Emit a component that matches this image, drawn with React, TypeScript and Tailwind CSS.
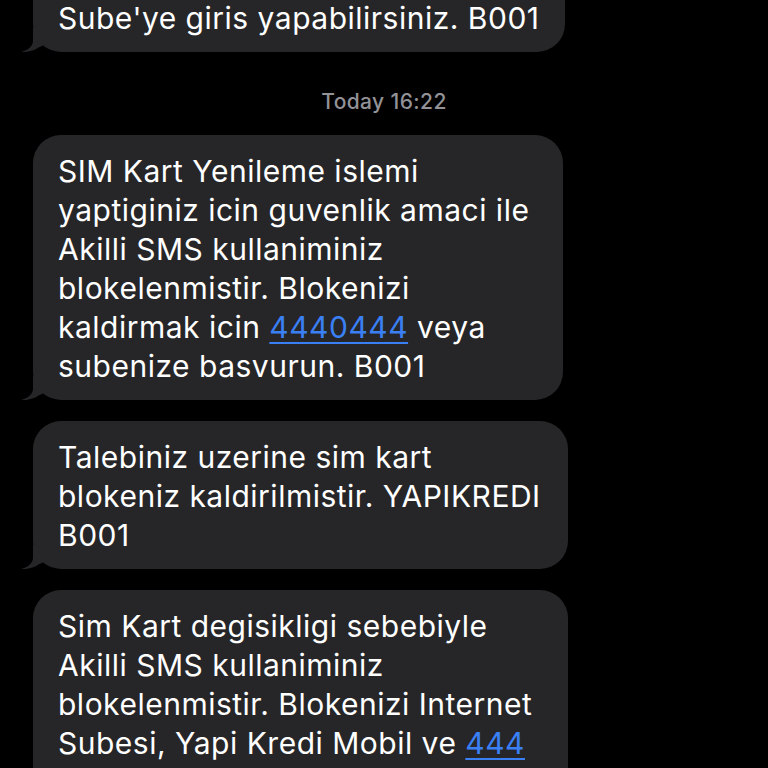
import React from "react";

type Line = (string | { link: string })[];

function Tail() {
  return (
    <svg
      className="absolute bottom-0 left-[-12px]"
      width="32"
      height="24"
      viewBox="0 0 32 24"
      fill="#262628"
    >
      <path d="M12 0 L12 13 C12 18 7 22.5 0 24 C6 24.6 13 22.8 17.5 19.6 L32 13 L32 0 Z" />
    </svg>
  );
}

function Bubble({
  lines,
  width,
  tail = true,
  pad = "pb-[14px]",
}: {
  lines: Line[];
  width: string;
  tail?: boolean;
  pad?: string;
}) {
  return (
    <div className={`relative ml-[33px] ${width}`}>
      <div
        className={`rounded-[28px] bg-[#262628] px-[25px] pt-[17px] ${pad} text-[30px] leading-[39px] tracking-[0.5px] text-white`}
      >
        {lines.map((line, i) => (
          <div key={i} className="whitespace-nowrap">
            {line.map((part, j) =>
              typeof part === "string" ? (
                <span key={j}>{part}</span>
              ) : (
                <span
                  key={j}
                  className="text-[#3a80f4] underline decoration-[2px] underline-offset-[4px]"
                >
                  {part.link}
                </span>
              )
            )}
          </div>
        ))}
      </div>
      {tail && <Tail />}
    </div>
  );
}

export default function App() {
  return (
    <div
      className="h-[768px] w-[768px] overflow-hidden bg-black"
      style={{ fontFamily: "Inter, 'Liberation Sans', sans-serif" }}
    >
      <div className="-mt-[30px]">
        <div className="relative ml-[33px] w-[532px]">
          <div className="whitespace-nowrap rounded-[28px] bg-[#262628] px-[25px] pb-[14px] pt-[29px] text-[30px] leading-[39px] tracking-[0.5px] text-white">
            Sube'ye giris yapabilirsiniz. B001
          </div>
          <Tail />
        </div>
      </div>

      <div className="mb-[21px] mt-[38px] text-center text-[21px] font-medium leading-[24px] tracking-[0.4px] text-[#929297]">
        Today 16:22
      </div>

      <div className="flex flex-col gap-[21px]">
        <Bubble
          width="w-[530px]"
          lines={[
            ["SIM Kart Yenileme islemi"],
            ["yaptiginiz icin guvenlik amaci ile"],
            ["Akilli SMS kullaniminiz"],
            ["blokelenmistir. Blokenizi"],
            ["kaldirmak icin ", { link: "4440444" }, " veya"],
            ["subenize basvurun. B001"],
          ]}
        />
        <Bubble
          width="w-[535px]"
          lines={[
            ["Talebiniz uzerine sim kart"],
            ["blokeniz kaldirilmistir. YAPIKREDI"],
            ["B001"],
          ]}
        />
        <Bubble
          width="w-[535px]"
          tail={false}
          pad="pb-[60px]"
          lines={[
            ["Sim Kart degisikligi sebebiyle"],
            ["Akilli SMS kullaniminiz"],
            ["blokelenmistir. Blokenizi Internet"],
            ["Subesi, Yapi Kredi Mobil ve ", { link: "444" }],
          ]}
        />
      </div>
    </div>
  );
}
